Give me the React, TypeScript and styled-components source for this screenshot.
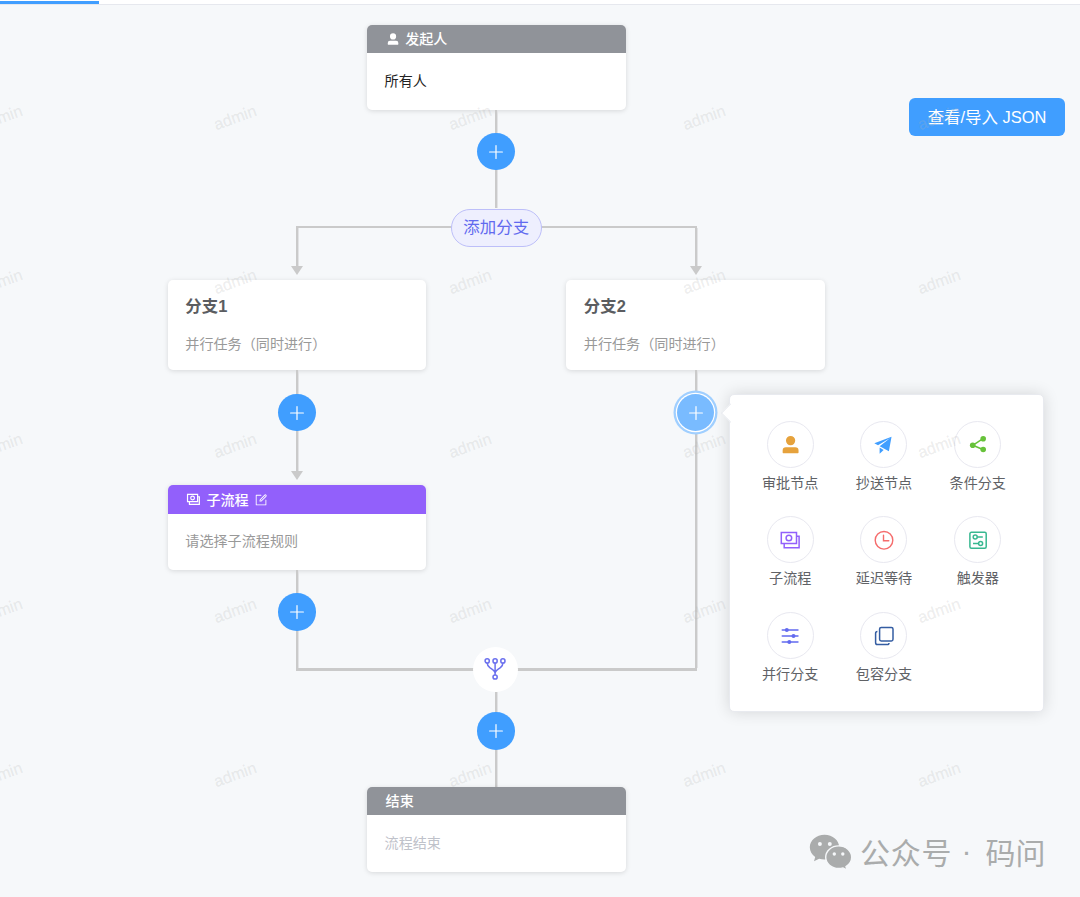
import React, {ReactNode} from 'react';
import styled, {createGlobalStyle, css} from 'styled-components';

const GlobalStyle = createGlobalStyle`
  * {
    box-sizing: border-box;
  }
  body {
    margin: 0;
    background: #f6f8fa;
    font-family: "Liberation Sans", "Noto Sans CJK SC", sans-serif;
    font-size: 14.1px;
    color: #303133;
  }
`;

const lineColor = '#cacaca';

const Page = styled.div`
  position: relative;
  width: 1080px;
  height: 897px;
  overflow: hidden;
`;

const TabBar = styled.div`
  height: 5px;
  padding-top: 1px;
  background: #fff;
  border-bottom: 1px solid #e6e8ee;
`;

const ActiveTab = styled.div`
  width: 98.5px;
  height: 3px;
  background: #409eff;
`;

const JsonButton = styled.button`
  position: absolute;
  top: 98px;
  right: 15px;
  width: 156px;
  height: 38px;
  padding: 0 0 2px;
  border: 0;
  border-radius: 6px;
  background: #409eff;
  color: #fff;
  font: inherit;
  font-size: 16.45px;
`;

/* ---------- flow ---------- */

const Flow = styled.div`
  display: flex;
  flex-direction: column;
  align-items: center;
  width: 797px;
  margin-left: 97.75px;
  padding-top: 20px;
`;

// 2px core with a soft third pixel on the right
const verticalLine = css`
  background: linear-gradient(to right, ${lineColor} 2px, #e2e3e5 2px) calc(50% + 0.5px) top / 3px 100% no-repeat;
`;

const Card = styled.div<{ $height: number }>`
  display: flex;
  flex-direction: column;
  flex: none;
  width: 258.5px;
  height: ${p => p.$height}px;
  border-radius: 5px;
  overflow: hidden;
  background: #fff;
  box-shadow: 0 1px 5px rgba(0, 0, 0, 0.13);
`;

const CardHeader = styled.div<{ $color: string }>`
  display: flex;
  align-items: center;
  gap: 5.5px;
  height: 28.2px;
  padding-left: 18.6px;
  background: ${p => p.$color};
  color: #fff;
  font-weight: 500;
  line-height: 28px;
`;

const CardBody = styled.div<{ $color: string }>`
  flex: 1;
  display: flex;
  align-items: center;
  padding: 0 17.6px 3.5px;
  color: ${p => p.$color};
`;

const BranchBody = styled.div`
  padding: 13px 17.6px;
`;

const BranchTitle = styled.div`
  font-size: 16.45px;
  font-weight: bold;
  line-height: 26px;
  color: #5b5d61;
`;

const BranchText = styled.div`
  margin-top: 14px;
  line-height: 22px;
  color: #999;
`;

const Step = styled.div<{ $height?: number; $top?: number }>`
  display: flex;
  justify-content: center;
  align-items: flex-start;
  width: 100%;
  padding-top: ${p => p.$top ?? 23.3}px;
  ${p => (p.$height ? `height: ${p.$height}px;` : 'flex: 1;')}
  ${verticalLine}
`;

const PlusButton = styled.div<{ $active?: boolean }>`
  position: relative;
  display: flex;
  align-items: center;
  justify-content: center;
  width: 37.6px;
  height: 37.6px;
  border-radius: 50%;
  color: #fff;
  background: ${p => (p.$active ? '#79bbff' : '#409eff')};
  ${p => p.$active && 'box-shadow: 0 0 0 1.2px #fff, 0 0 0 3.5px #a0cfff;'}
`;

const AddBranchButton = styled.div`
  z-index: 1;
  width: 91px;
  height: 37.6px;
  margin: 1px 0 -20.6px;
  border: 1.2px solid #bdbff9;
  border-radius: 19px;
  background: #eeeffe;
  color: #626aef;
  font-size: 16.45px;
  line-height: 35px;
  text-align: center;
`;

const Rail = styled.div`
  flex: none;
  width: 400.8px;
  height: 2.4px;
  background: ${lineColor};
`;

const Branches = styled.div`
  display: flex;
  height: 440px;
`;

const Branch = styled.div`
  display: flex;
  flex-direction: column;
  align-items: center;
  width: 398.5px;
`;

const Drop = styled.div<{ $line: number }>`
  display: flex;
  flex-direction: column;
  align-items: center;
  width: 100%;
  padding-bottom: 5px;

  &::before {
    content: '';
    width: 100%;
    height: ${p => p.$line}px;
    ${verticalLine}
  }

  &::after {
    content: '';
    border: 6.8px solid transparent;
    border-top: 9px solid ${lineColor};
    border-bottom: 0;
  }
`;

const Merge = styled.div`
  display: flex;
  align-items: center;
  justify-content: center;
  flex: none;
  width: 45px;
  height: 45px;
  margin: -23.9px 2.4px 0 0;
  border-radius: 50%;
  background: #fff;
`;

/* ---------- node picker ---------- */

const Popover = styled.div`
  position: absolute;
  top: 0.5px;
  left: 51.8px;
  z-index: 2;
  display: grid;
  grid-template-columns: repeat(3, 93.8px);
  grid-auto-rows: 95.8px;
  width: 315.6px;
  height: 317.4px;
  padding: 25.4px 0 0 13.8px;
  border: 1px solid #e8eaef;
  border-radius: 5px;
  background: #fff;
  box-shadow: 0 0 16px rgba(0, 0, 0, 0.14);

  &::before {
    content: '';
    position: absolute;
    top: 11px;
    left: -6px;
    width: 11.5px;
    height: 11.5px;
    transform: rotate(45deg);
    border: 1px solid #e8eaef;
    border-top-color: transparent;
    border-right-color: transparent;
    background: #fff;
  }
`;

const PickerItem = styled.div`
  display: flex;
  flex-direction: column;
  align-items: center;
  color: #606266;
  line-height: 20px;
`;

const PickerIcon = styled.div<{ $color: string }>`
  display: flex;
  align-items: center;
  justify-content: center;
  width: 47px;
  height: 47px;
  margin-bottom: 5px;
  border: 1.2px solid #e8e8f0;
  border-radius: 50%;
  color: ${p => p.$color};
`;

/* ---------- watermarks ---------- */

const WatermarkLayer = styled.div`
  position: absolute;
  top: 35px;
  left: -116.1px;
  z-index: 5;
  display: grid;
  grid-template-columns: repeat(5, 234.4px);
  grid-auto-rows: 164.4px;
  place-items: center;
  pointer-events: none;
`;

const Watermark = styled.span`
  transform: rotate(-20deg);
  font-size: 16.2px;
  -webkit-text-stroke: 0.3px rgba(180, 180, 180, 0.16);
  color: rgba(180, 180, 180, 0.22);
`;

const Account = styled.div`
  position: absolute;
  left: 809px;
  top: 832px;
  display: flex;
  align-items: center;
  height: 40px;
  color: #aaacac;
  font-size: 30px;
`;

const AccountName = styled.span<{ $left: number; $spacing: number }>`
  margin: -2px 0 0 ${p => p.$left}px;
  letter-spacing: ${p => p.$spacing}px;
  white-space: nowrap;
`;

/* ---------- icons ---------- */

const Glyph = ({size, children}: { size: number, children: ReactNode }) => (
    <svg width={size} height={size} viewBox="0 0 1024 1024" fill="currentColor">{children}</svg>
);

// 22x22 outline icons
const Outline = ({size = 22, width = 1.5, children}: { size?: number, width?: number, children: ReactNode }) => (
    <svg width={size} height={size} viewBox="0 0 22 22" fill="none" stroke="currentColor" strokeWidth={width}>
        {children}
    </svg>
);

const PlusIcon = () => (
    <svg width="14" height="14" viewBox="0 0 14 14" stroke="currentColor" strokeWidth="1.2" strokeLinecap="round">
        <path d="M7 .6v12.8M.6 7h12.8"/>
    </svg>
);

const UserIcon = ({size}: { size: number }) => (
    <Glyph size={size}>
        <path d="M288 320a224 224 0 1 0 448 0 224 224 0 1 0-448 0m544 608H160a32 32 0 0 1-32-32v-96a160 160 0 0 1 160-160h448a160 160 0 0 1 160 160v96a32 32 0 0 1-32 32z"/>
    </Glyph>
);

const SendIcon = () => (
    <Glyph size={21.2}>
        <path d="m64 448 832-320-128 704-446.08-243.328L832 192 242.816 545.472zm256 512V657.024L512 768z"/>
    </Glyph>
);

const EditIcon = () => (
    <Glyph size={14.1}>
        <path d="M832 512a32 32 0 1 1 64 0v352a32 32 0 0 1-32 32H160a32 32 0 0 1-32-32V160a32 32 0 0 1 32-32h352a32 32 0 0 1 0 64H192v640h640z"/>
        <path d="m469.952 554.24 52.8-7.552L847.104 222.4a32 32 0 1 0-45.248-45.248L477.44 501.44l-7.552 52.8zm422.4-422.4a96 96 0 0 1 0 135.808l-331.84 331.84a32 32 0 0 1-18.112 9.088L436.8 623.68a32 32 0 0 1-36.224-36.224l15.104-105.6a32 32 0 0 1 9.024-18.112l331.904-331.84a96 96 0 0 1 135.744 0z"/>
    </Glyph>
);

const ShareIcon = () => (
    <Outline>
        <path d="M16 5.7 5.8 12.3 16 16.5"/>
        <g fill="currentColor" stroke="none">
            <circle cx="16.2" cy="5.7" r="2.8"/>
            <circle cx="5.7" cy="12.3" r="2.8"/>
            <circle cx="16.2" cy="16.5" r="2.8"/>
        </g>
    </Outline>
);

const SubprocessIcon = ({size, width}: { size?: number, width?: number }) => (
    <Outline size={size} width={width}>
        <path d="M2.3 3.6h15.2v11H2.3zM17.5 7.2h2.6v11.6H5.2v-4.2"/>
        <circle cx="9.9" cy="9" r="2.8"/>
    </Outline>
);

const ClockIcon = () => (
    <Outline width={1.4}>
        <circle cx="11" cy="11.3" r="8.8"/>
        <path d="M10.5 6.3v5.5h5.3" strokeLinecap="round"/>
    </Outline>
);

const TriggerIcon = () => (
    <Outline>
        <rect x="2.9" y="3.3" width="16.3" height="16" rx="1.5"/>
        <circle cx="8.2" cy="7.9" r="2"/>
        <circle cx="13.6" cy="14.6" r="2"/>
        <path d="M10.2 7.9h5.6M6 14.6h5.6"/>
    </Outline>
);

const ParallelIcon = () => (
    <Outline width={1.4}>
        <path d="M3.2 5h15.8M3.2 11h15.8M3.2 17h15.8" strokeLinecap="round"/>
        <g fill="currentColor" stroke="none">
            <circle cx="7.8" cy="5" r="2"/>
            <circle cx="14.5" cy="11" r="2"/>
            <circle cx="10.3" cy="17" r="2"/>
        </g>
    </Outline>
);

const InclusiveIcon = () => (
    <Outline>
        <rect x="6.6" y="2.5" width="13.4" height="13.4" rx="1.6"/>
        <path d="M4.4 6.6q-1.8 0-1.8 1.8v9.4q0 1.8 1.8 1.8h9.8q1.8 0 1.8-1.7"/>
    </Outline>
);

const MergeIcon = () => (
    <svg width="24" height="24" viewBox="0 0 24 24" fill="none" stroke="#6b70ee" strokeWidth="1.5">
        <circle cx="4.2" cy="3.9" r="2.1"/>
        <circle cx="12.1" cy="3.9" r="2.1"/>
        <circle cx="19.9" cy="3.9" r="2.1"/>
        <circle cx="12.1" cy="20" r="2.1"/>
        <path d="M12.1 6v12M4.2 6q0 2.6 2.6 4.6 5.3 3.4 5.3 5.6 0-2.2 5.3-5.6 2.6-2 2.5-4.6"/>
    </svg>
);

const WechatIcon = () => (
    <svg width="44" height="38" viewBox="0 0 44 38" fill="#aaacac">
        <path d="M15.5 1.8C7.3 1.8.8 7.4.8 14.3c0 3.9 2.1 7.4 5.4 9.7L5 28.2l5.100-2.500c1.700.5 3.500.8 5.400.8 8.200 0 14.700-5.500 14.700-12.200S23.700 1.800 15.500 1.800z"/>
        <path d="M29.700 12.900c-7.200 0-13 5-13 11.300s5.800 11.300 13 11.300c1.500 0 3-.2 4.300-.6l4 2.200-1-3.500c3.500-2.200 5.700-5.500 5.700-9.400 0-6.300-5.800-11.300-13-11.300z" stroke="#f6f8fa" strokeWidth="1.4"/>
        <g fill="#f6f8fa">
            <circle cx="10.9" cy="11" r="2"/>
            <circle cx="20.8" cy="11" r="2"/>
            <circle cx="25.3" cy="21" r="1.7"/>
            <circle cx="33.8" cy="21" r="1.7"/>
        </g>
    </svg>
);

const nodeTypes: { name: string, color: string, icon: ReactNode }[] = [
    {name: '审批节点', color: '#e6a23c', icon: <UserIcon size={21.2}/>},
    {name: '抄送节点', color: '#409eff', icon: <SendIcon/>},
    {name: '条件分支', color: '#67c23a', icon: <ShareIcon/>},
    {name: '子流程', color: '#9260fb', icon: <SubprocessIcon/>},
    {name: '延迟等待', color: '#f56c6c', icon: <ClockIcon/>},
    {name: '触发器', color: '#38b890', icon: <TriggerIcon/>},
    {name: '并行分支', color: '#626aef', icon: <ParallelIcon/>},
    {name: '包容分支', color: '#345da2', icon: <InclusiveIcon/>}
];

const NodePicker = () => (
    <Popover>
        {nodeTypes.map(type => (
            <PickerItem key={type.name}>
                <PickerIcon $color={type.color}>{type.icon}</PickerIcon>
                {type.name}
            </PickerItem>
        ))}
    </Popover>
);

const AddStep = ({height, top, open}: { height?: number, top?: number, open?: boolean }) => (
    <Step $height={height} $top={top}>
        <PlusButton $active={open}>
            <PlusIcon/>
            {open ? <NodePicker/> : null}
        </PlusButton>
    </Step>
);

const BranchCard = ({title}: { title: string }) => (
    <Card $height={90.5}>
        <BranchBody>
            <BranchTitle>{title}</BranchTitle>
            <BranchText>并行任务（同时进行）</BranchText>
        </BranchBody>
    </Card>
);

const App = () => (
    <Page>
        <GlobalStyle/>
        <TabBar><ActiveTab/></TabBar>
        <Flow>
            <Card $height={84.5}>
                <CardHeader $color="#909399"><UserIcon size={14.1}/>发起人</CardHeader>
                <CardBody $color="#222">所有人</CardBody>
            </Card>
            <AddStep height={98.5}/>
            <AddBranchButton>添加分支</AddBranchButton>
            <Rail/>
            <Branches>
                <Branch>
                    <Drop $line={37.6}/>
                    <BranchCard title="分支1"/>
                    <AddStep height={101}/>
                    <Drop $line={0}/>
                    <Card $height={84.5}>
                        <CardHeader $color="#9260fb">
                            <SubprocessIcon size={14.6} width={1.8}/>子流程<EditIcon/>
                        </CardHeader>
                        <CardBody $color="#999">请选择子流程规则</CardBody>
                    </Card>
                    <AddStep/>
                </Branch>
                <Branch>
                    <Drop $line={37.6}/>
                    <BranchCard title="分支2"/>
                    <AddStep open/>
                </Branch>
            </Branches>
            <Rail/>
            <Merge><MergeIcon/></Merge>
            <AddStep height={95.2} top={20.2}/>
            <Card $height={84.5}>
                <CardHeader $color="#909399">结束</CardHeader>
                <CardBody $color="#bfc2ca">流程结束</CardBody>
            </Card>
        </Flow>
        <JsonButton>查看/导入 JSON</JsonButton>
        <Account>
            <WechatIcon/>
            <AccountName $left={7} $spacing={0.8}>公众号</AccountName>
            <AccountName $left={9} $spacing={0}>·</AccountName>
            <AccountName $left={14} $spacing={0}>码问</AccountName>
        </Account>
        <WatermarkLayer>
            {Array.from({length: 25}, (_, i) => <Watermark key={i}>admin</Watermark>)}
        </WatermarkLayer>
    </Page>
);

export default App;
